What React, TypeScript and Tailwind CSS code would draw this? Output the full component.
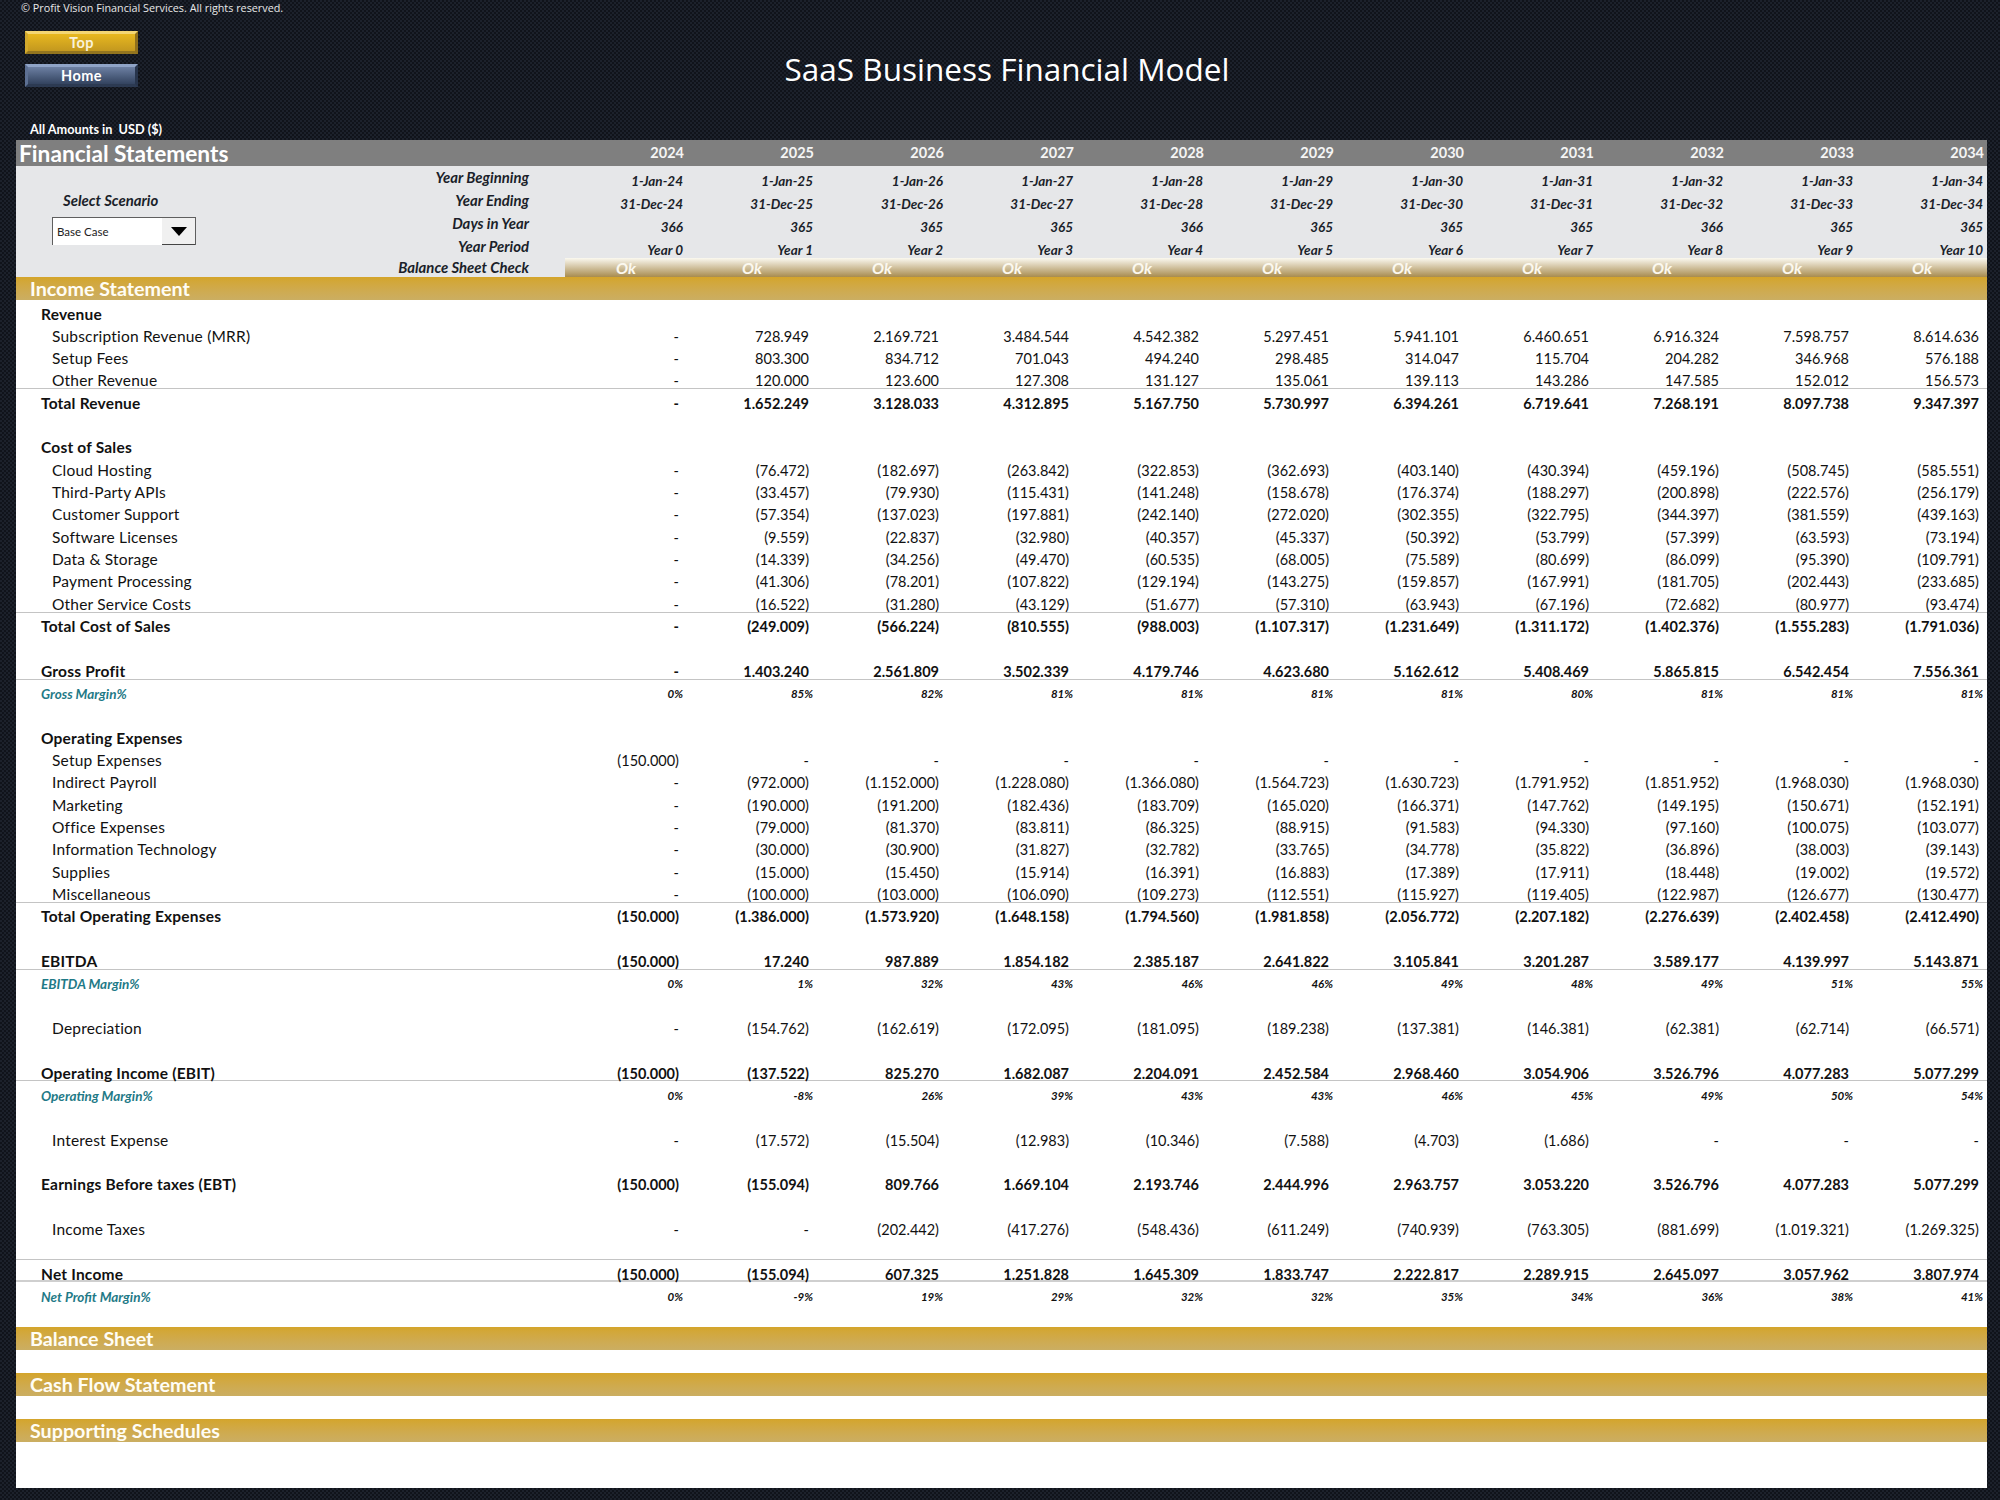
import React from 'react';

type Kind = 'blank' | 'head' | 'item' | 'total' | 'pct';

type Row = {
  kind: Kind;
  label?: string;
  values?: string;
  line?: 'thin' | 'thick';
};

const years = ['2024', '2025', '2026', '2027', '2028', '2029', '2030', '2031', '2032', '2033', '2034'];
const yearBeginning = years.map((y) => `1-Jan-${y.slice(2)}`);
const yearEnding = years.map((y) => `31-Dec-${y.slice(2)}`);
const daysInYear = ['366', '365', '365', '365', '366', '365', '365', '365', '366', '365', '365'];
const yearPeriod = years.map((_, i) => `Year ${i}`);

const rows: Row[] = [
  { kind: 'head', label: 'Revenue' },
  { kind: 'item', label: 'Subscription Revenue (MRR)', values: '- 728.949 2.169.721 3.484.544 4.542.382 5.297.451 5.941.101 6.460.651 6.916.324 7.598.757 8.614.636' },
  { kind: 'item', label: 'Setup Fees', values: '- 803.300 834.712 701.043 494.240 298.485 314.047 115.704 204.282 346.968 576.188' },
  { kind: 'item', label: 'Other Revenue', values: '- 120.000 123.600 127.308 131.127 135.061 139.113 143.286 147.585 152.012 156.573', line: 'thin' },
  { kind: 'total', label: 'Total Revenue', values: '- 1.652.249 3.128.033 4.312.895 5.167.750 5.730.997 6.394.261 6.719.641 7.268.191 8.097.738 9.347.397' },
  { kind: 'blank' },
  { kind: 'head', label: 'Cost of Sales' },
  { kind: 'item', label: 'Cloud Hosting', values: '- (76.472) (182.697) (263.842) (322.853) (362.693) (403.140) (430.394) (459.196) (508.745) (585.551)' },
  { kind: 'item', label: 'Third-Party APIs', values: '- (33.457) (79.930) (115.431) (141.248) (158.678) (176.374) (188.297) (200.898) (222.576) (256.179)' },
  { kind: 'item', label: 'Customer Support', values: '- (57.354) (137.023) (197.881) (242.140) (272.020) (302.355) (322.795) (344.397) (381.559) (439.163)' },
  { kind: 'item', label: 'Software Licenses', values: '- (9.559) (22.837) (32.980) (40.357) (45.337) (50.392) (53.799) (57.399) (63.593) (73.194)' },
  { kind: 'item', label: 'Data & Storage', values: '- (14.339) (34.256) (49.470) (60.535) (68.005) (75.589) (80.699) (86.099) (95.390) (109.791)' },
  { kind: 'item', label: 'Payment Processing', values: '- (41.306) (78.201) (107.822) (129.194) (143.275) (159.857) (167.991) (181.705) (202.443) (233.685)' },
  { kind: 'item', label: 'Other Service Costs', values: '- (16.522) (31.280) (43.129) (51.677) (57.310) (63.943) (67.196) (72.682) (80.977) (93.474)', line: 'thin' },
  { kind: 'total', label: 'Total Cost of Sales', values: '- (249.009) (566.224) (810.555) (988.003) (1.107.317) (1.231.649) (1.311.172) (1.402.376) (1.555.283) (1.791.036)' },
  { kind: 'blank' },
  { kind: 'total', label: 'Gross Profit', values: '- 1.403.240 2.561.809 3.502.339 4.179.746 4.623.680 5.162.612 5.408.469 5.865.815 6.542.454 7.556.361', line: 'thin' },
  { kind: 'pct', label: 'Gross Margin%', values: '0% 85% 82% 81% 81% 81% 81% 80% 81% 81% 81%' },
  { kind: 'blank' },
  { kind: 'head', label: 'Operating Expenses' },
  { kind: 'item', label: 'Setup Expenses', values: '(150.000) - - - - - - - - - -' },
  { kind: 'item', label: 'Indirect Payroll', values: '- (972.000) (1.152.000) (1.228.080) (1.366.080) (1.564.723) (1.630.723) (1.791.952) (1.851.952) (1.968.030) (1.968.030)' },
  { kind: 'item', label: 'Marketing', values: '- (190.000) (191.200) (182.436) (183.709) (165.020) (166.371) (147.762) (149.195) (150.671) (152.191)' },
  { kind: 'item', label: 'Office Expenses', values: '- (79.000) (81.370) (83.811) (86.325) (88.915) (91.583) (94.330) (97.160) (100.075) (103.077)' },
  { kind: 'item', label: 'Information Technology', values: '- (30.000) (30.900) (31.827) (32.782) (33.765) (34.778) (35.822) (36.896) (38.003) (39.143)' },
  { kind: 'item', label: 'Supplies', values: '- (15.000) (15.450) (15.914) (16.391) (16.883) (17.389) (17.911) (18.448) (19.002) (19.572)' },
  { kind: 'item', label: 'Miscellaneous', values: '- (100.000) (103.000) (106.090) (109.273) (112.551) (115.927) (119.405) (122.987) (126.677) (130.477)', line: 'thin' },
  { kind: 'total', label: 'Total Operating Expenses', values: '(150.000) (1.386.000) (1.573.920) (1.648.158) (1.794.560) (1.981.858) (2.056.772) (2.207.182) (2.276.639) (2.402.458) (2.412.490)' },
  { kind: 'blank' },
  { kind: 'total', label: 'EBITDA', values: '(150.000) 17.240 987.889 1.854.182 2.385.187 2.641.822 3.105.841 3.201.287 3.589.177 4.139.997 5.143.871', line: 'thin' },
  { kind: 'pct', label: 'EBITDA Margin%', values: '0% 1% 32% 43% 46% 46% 49% 48% 49% 51% 55%' },
  { kind: 'blank' },
  { kind: 'item', label: 'Depreciation', values: '- (154.762) (162.619) (172.095) (181.095) (189.238) (137.381) (146.381) (62.381) (62.714) (66.571)' },
  { kind: 'blank' },
  { kind: 'total', label: 'Operating Income (EBIT)', values: '(150.000) (137.522) 825.270 1.682.087 2.204.091 2.452.584 2.968.460 3.054.906 3.526.796 4.077.283 5.077.299', line: 'thin' },
  { kind: 'pct', label: 'Operating Margin%', values: '0% -8% 26% 39% 43% 43% 46% 45% 49% 50% 54%' },
  { kind: 'blank' },
  { kind: 'item', label: 'Interest Expense', values: '- (17.572) (15.504) (12.983) (10.346) (7.588) (4.703) (1.686) - - -' },
  { kind: 'blank' },
  { kind: 'total', label: 'Earnings Before taxes (EBT)', values: '(150.000) (155.094) 809.766 1.669.104 2.193.746 2.444.996 2.963.757 3.053.220 3.526.796 4.077.283 5.077.299' },
  { kind: 'blank' },
  { kind: 'item', label: 'Income Taxes', values: '- - (202.442) (417.276) (548.436) (611.249) (740.939) (763.305) (881.699) (1.019.321) (1.269.325)' },
  { kind: 'blank', line: 'thin' },
  { kind: 'total', label: 'Net Income', values: '(150.000) (155.094) 607.325 1.251.828 1.645.309 1.833.747 2.222.817 2.289.915 2.645.097 3.057.962 3.807.974', line: 'thick' },
  { kind: 'pct', label: 'Net Profit Margin%', values: '0% -9% 19% 29% 32% 32% 35% 34% 36% 38% 41%' },
  { kind: 'blank' },
];

const gridCols = 'grid grid-cols-[549px_122px_repeat(10,130px)]';

function SectionBand({ title }: { title: string }) {
  return (
    <div className="flex h-[23px] items-center bg-gradient-to-b from-[#d4a52a] to-[#cbae62] pl-[14px] text-[19.7px] leading-[23px] font-bold text-[#fffdf5]">
      {title}
    </div>
  );
}

function StatementRow({ row }: { row: Row }) {
  const line =
    row.line === 'thick'
      ? 'border-b-[2px] border-[#cfcfcf]'
      : row.line === 'thin'
        ? 'border-b border-[#c4c4c4]'
        : '';

  if (row.kind === 'blank') {
    return <div className={`h-[22.33px] ${line}`} />;
  }

  const isPct = row.kind === 'pct';
  const labelClass =
    row.kind === 'item'
      ? 'pl-[36px] text-[15.5px] leading-[14px] tracking-[0.2px] font-normal'
      : isPct
        ? 'pl-[25px] text-[13.5px] font-bold italic text-[#1f7a87]'
        : 'pl-[25px] text-[15.5px] leading-[14px] tracking-[0.2px] font-bold';
  const valueClass =
    row.kind === 'total'
      ? 'pr-[8px] text-right font-bold'
      : isPct
        ? 'pr-[4px] text-right text-[11.5px] font-bold italic'
        : 'pr-[8px] text-right';

  return (
    <div className={`${gridCols} h-[22.33px] pt-[6.5px] text-[14.5px] leading-[16px] text-[#111] ${line}`}>
      <div className={labelClass}>{row.label}</div>
      {row.values?.split(' ').map((value, i) => (
        <div key={i} className={valueClass}>
          {value}
        </div>
      ))}
    </div>
  );
}

function InfoValues({ values }: { values: string[] }) {
  return (
    <div className="grid h-[23px] grid-cols-[122px_repeat(10,130px)] pt-[7px] text-[13.5px] leading-[16px] font-bold italic text-[#1b1f2a]">
      {values.map((value, i) => (
        <div key={i} className="pr-[4px] text-right">
          {value}
        </div>
      ))}
    </div>
  );
}

export default function App() {
  return (
    <div className="h-[1500px] w-[2000px] overflow-hidden bg-[#151922] bg-[repeating-conic-gradient(#10131a_0%_25%,#1c212b_0%_50%)] bg-size-[4px_4px] font-['Lato',sans-serif]">
      <header className="grid h-[140px] grid-cols-[1fr_auto_1fr]">
        <div className="flex flex-col items-start pl-[21px]">
          <p className="font-['Open_Sans',sans-serif] text-[10.8px] leading-[15px] text-[#e8e8e8]">
            © Profit Vision Financial Services. All rights reserved.
          </p>
          <button className="mt-[16px] ml-[4px] h-[23px] w-[113px] border-[3px] border-t-[#f3d673] border-r-[#8f6f1c] border-b-[#93751f] border-l-[#d2a92c] bg-gradient-to-b from-[#e8b81f] to-[#c3981f] text-[14.5px] leading-[16px] font-bold tracking-[0.4px] text-[#faf2da]">
            Top
          </button>
          <button className="mt-[10px] ml-[4px] h-[23px] w-[113px] border-[3px] border-t-[#8fa3c6] border-r-[#28354c] border-b-[#2c3a52] border-l-[#5d7093] bg-gradient-to-b from-[#6d80a3] to-[#33435f] text-[14.5px] leading-[16px] font-bold tracking-[0.4px] text-white">
            Home
          </button>
          <p className="mt-[34px] ml-[9px] text-[12.7px] leading-[16px] font-bold text-white">All Amounts in&nbsp; USD ($)</p>
        </div>
        <h1 className="pt-[49px] pl-[14px] font-['Open_Sans',sans-serif] text-[31.5px] leading-[40px] font-normal text-white">
          SaaS Business Financial Model
        </h1>
        <div />
      </header>

      <main className="ml-[16px] h-[1348px] w-[1971px] bg-white">
        <div className={`${gridCols} h-[26px] bg-[#7f7f7f] text-white`}>
          <div className="pl-[3px] text-[22.7px] leading-[27px] font-bold">Financial Statements</div>
          {years.map((year) => (
            <div key={year} className="pt-[4px] pr-[3px] text-right text-[14.5px] leading-[18px] font-bold text-[#f5f5f5]">
              {year}
            </div>
          ))}
        </div>

        <div className="flex h-[111px] bg-[#e6e7e9]">
          <div className="flex w-[549px] shrink-0">
            <div className="flex w-[210px] flex-col">
              <div className="pt-[27px] pl-[47px] text-[14.9px] leading-[14px] font-bold italic text-[#1b1f2a]">Select Scenario</div>
              <div className="mt-[10px] ml-[36px] flex h-[28px] w-[144px] border-t border-r border-l border-[#5f5f5f] bg-white">
                <div className="flex-1 pt-[6px] pl-[4px] text-[11.5px] leading-[15px] text-[#222]">Base Case</div>
                <div className="flex w-[33px] items-center justify-center border-b border-[#444] bg-[#f0f0f0]">
                  <svg width="16" height="9" viewBox="0 0 16 9">
                    <path d="M0 0h16l-8 9z" fill="#000" />
                  </svg>
                </div>
              </div>
            </div>
            <div className="flex flex-1 flex-col items-end pr-[36px] text-[14.9px] font-bold italic text-[#1b1f2a]">
              <div className="h-[23px] pt-[4px] leading-[15px]">Year Beginning</div>
              <div className="h-[23px] pt-[4px] leading-[15px]">Year Ending</div>
              <div className="h-[23px] pt-[4px] leading-[15px]">Days in Year</div>
              <div className="h-[23px] pt-[4px] leading-[15px]">Year Period</div>
              <div className="h-[19px] pt-[2px] leading-[15px]">Balance Sheet Check</div>
            </div>
          </div>
          <div className="flex-1">
            <InfoValues values={yearBeginning} />
            <InfoValues values={yearEnding} />
            <InfoValues values={daysInYear} />
            <InfoValues values={yearPeriod} />
            <div className="grid h-[19px] grid-cols-[122px_repeat(10,130px)] bg-gradient-to-b from-[#fbf9f0] to-[#a88c4e] text-center text-[16px] leading-[19px] font-bold italic text-[#fbf8ef]">
              {years.map((year) => (
                <div key={year}>Ok</div>
              ))}
            </div>
          </div>
        </div>

        <SectionBand title="Income Statement" />

        {rows.map((row, i) => (
          <StatementRow key={i} row={row} />
        ))}

        <SectionBand title="Balance Sheet" />
        <div className="h-[23px]" />
        <SectionBand title="Cash Flow Statement" />
        <div className="h-[23px]" />
        <SectionBand title="Supporting Schedules" />
      </main>
    </div>
  );
}
